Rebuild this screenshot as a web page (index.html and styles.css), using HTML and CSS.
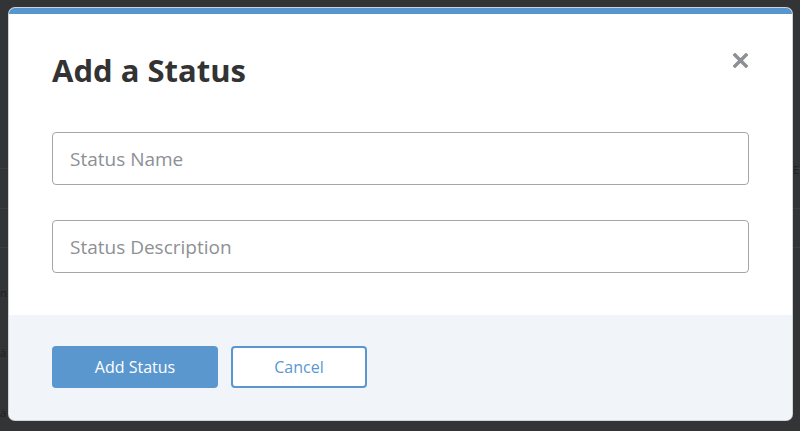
FILE: index.html
```html
<!DOCTYPE html>
<html>
<head>
<meta charset="utf-8">
<link rel="stylesheet" href="styles.css">
</head>
<body>
<div class="backdrop">
  <div class="bg-line l1"></div>
  <div class="bg-line l2"></div>
  <div class="bg-line l3"></div>
  <div class="bg-text t1">n</div>
  <div class="bg-text t2">ä</div>
  <div class="bg-text t3">ä</div>
  <div class="bg-text t4">E</div>
  <div class="modal">
    <div class="modal-body">
      <div class="modal-header">
        <h1 class="title">Add a Status</h1>
        <span class="close" aria-label="Close">
          <svg width="15" height="15" viewBox="0 0 15 15"><path d="M2 2 L13 13 M13 2 L2 13" stroke="#8c8f93" stroke-width="3.4" stroke-linecap="square" fill="none"/></svg>
        </span>
      </div>
      <div class="field"><input class="input" type="text" placeholder="Status Name"></div>
      <div class="field"><input class="input" type="text" placeholder="Status Description"></div>
    </div>
    <div class="modal-footer">
      <button class="btn btn-primary">Add Status</button>
      <button class="btn btn-secondary">Cancel</button>
    </div>
  </div>
</div>
</body>
</html>
```
FILE: styles.css
```css
html, body {
  margin: 0;
  padding: 0;
  background: #333436;
  font-family: "Open Sans", "Noto Sans", sans-serif;
}
.backdrop {
  position: relative;
  width: 800px;
  height: 431px;
  padding: 8px 0 0 9px;
  box-sizing: border-box;
  overflow: hidden;
}
.bg-line {
  position: absolute;
  left: 0;
  width: 800px;
  height: 1px;
  background: #3d3e41;
}
.l1 { top: 168px; }
.l2 { top: 208px; }
.l3 { top: 247px; }
.bg-text {
  position: absolute;
  color: #1e1f21;
  font-size: 11px;
  line-height: 14px;
}
.t1 { left: 0; top: 286px; }
.t2 { left: 0; top: 346px; }
.t3 { left: 0; top: 406px; }
.t4 { left: 793px; top: 163px; }
.modal {
  position: relative;
  width: 783px;
  height: 412px;
  background: #ffffff;
  border-radius: 6px;
  border-top: 6px solid #5596cf;
  box-sizing: border-box;
  overflow: hidden;
  display: flex;
  flex-direction: column;
  box-shadow: 0 0 0 1px #cfd2d6;
}
.modal-body {
  flex: 1;
  padding: 0 43px;
}
.modal-header {
  display: flex;
  justify-content: space-between;
  align-items: flex-start;
  height: 118px;
}
.title {
  margin: 36px 0 0 0;
  font-size: 31px;
  line-height: 40px;
  font-weight: 700;
  color: #333333;
}
.close {
  display: block;
  margin-top: 39px;
  margin-right: 1px;
  width: 15px;
  height: 15px;
  line-height: 0;
}
.field {
  margin-bottom: 35px;
}
.input {
  display: block;
  width: 100%;
  height: 53px;
  box-sizing: border-box;
  border: 1px solid #a3a6aa;
  border-radius: 4px;
  padding: 0 17px;
  font-family: "Open Sans", "Noto Sans", sans-serif;
  font-size: 19px;
  color: #333;
  outline: none;
}
.input::placeholder {
  color: #8d9094;
}
.modal-footer {
  height: 105px;
  background: #f1f5f9;
  padding: 31px 43px 0;
  box-sizing: border-box;
  display: flex;
  gap: 13px;
  align-items: flex-start;
}
.btn {
  height: 42px;
  border-radius: 4px;
  font-family: "Open Sans", "Noto Sans", sans-serif;
  font-size: 16px;
  box-sizing: border-box;
  cursor: pointer;
}
.btn-primary {
  width: 166px;
  background: #5a97cf;
  border: none;
  color: #ffffff;
}
.btn-secondary {
  width: 136px;
  background: #ffffff;
  border: 2px solid #5a97cf;
  color: #5a97cf;
}
```
